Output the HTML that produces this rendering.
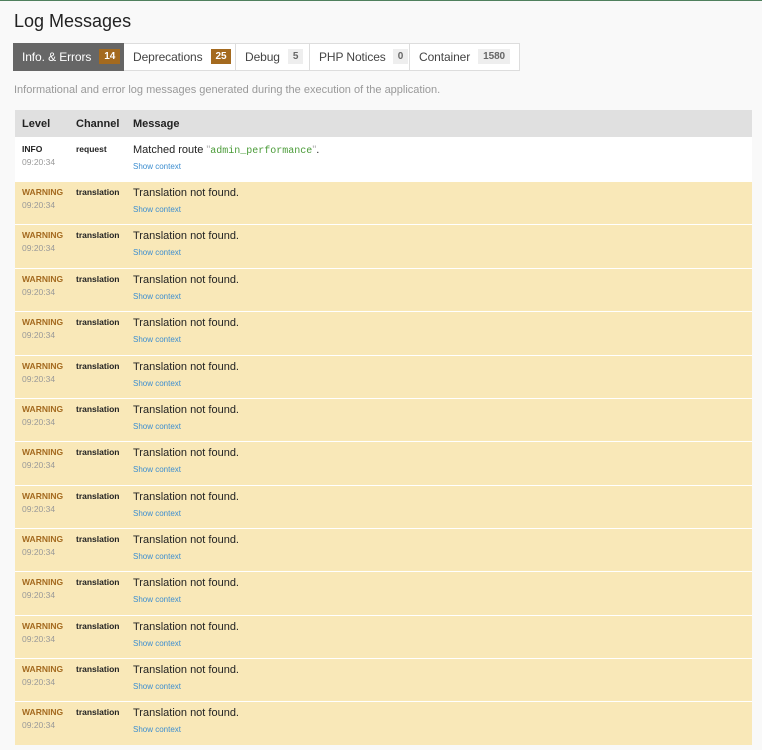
<!DOCTYPE html>
<html><head><style>
body{margin:0;width:762px;height:750px;background:#f9f9f9;font-family:"Liberation Sans",Arial,sans-serif;position:relative;overflow:hidden;border-top:1px solid #4f805d;box-sizing:border-box}
.a{position:absolute}
h1{position:absolute;left:14px;top:10px;margin:0;font-size:18px;font-weight:normal;color:#222}
.tabs{position:absolute;left:13px;top:42px;height:28px;display:flex}
.tab{height:28px;border:1px solid #ddd;border-left:none;background:#fff;font-size:12px;color:#444;display:flex;align-items:center;padding:0 9px;box-sizing:border-box;white-space:nowrap;letter-spacing:-0.1px}
.tab.on{background:#666;color:#fff;border-color:#666}
.b{margin-left:8px;font-size:10px;font-weight:bold;line-height:15px;padding:0 5px;background:#eee;color:#666;display:inline-block;position:relative;top:-1px}
.b.o{background:#a46a1f;color:#fff}
.desc{left:14px;top:83px;font-size:11px;color:#999}
.hdr{left:15px;top:109px;width:737px;height:27px;background:#e0e0e0;font-size:11px;font-weight:bold;color:#222}
.row{left:15px;width:737px;height:43px;border-top:1px solid #fff;background:#f9e8b8}
.lv{position:absolute;left:7px;top:5px;font-size:8.5px;font-weight:bold;color:#a46a1f}
.tm{position:absolute;left:7px;top:18px;font-size:8.5px;color:#999}
.ch{position:absolute;left:61px;top:5px;font-size:8.5px;font-weight:bold;color:#222}
.ms{position:absolute;left:118px;top:5px;font-size:11px;color:#222}
.sc{position:absolute;left:118px;top:23px;font-size:8px;color:#3d8ed0}
</style></head><body>
<h1>Log Messages</h1>
<div class="tabs">
<div class="tab on" style="width:111px">Info. &amp; Errors<span class="b o">14</span></div>
<div class="tab" style="width:112px">Deprecations<span class="b o">25</span></div>
<div class="tab" style="width:74px">Debug<span class="b">5</span></div>
<div class="tab" style="width:100px">PHP Notices<span class="b" style="margin-left:7px">0</span></div>
<div class="tab" style="width:110px">Container<span class="b">1580</span></div>
</div>
<div class="a desc">Informational and error log messages generated during the execution of the application.</div>
<div class="a hdr"><span class="a" style="left:7px;top:8px">Level</span><span class="a" style="left:61px;top:8px">Channel</span><span class="a" style="left:118px;top:8px">Message</span></div>
<div class="a row" style="top:136px;height:44px;border:none;background:#fff"><span class="lv" style="color:#222;top:7px">INFO</span><span class="tm" style="top:20px">09:20:34</span><span class="ch" style="top:7px">request</span><span class="ms" style="top:7px">Matched route <span style="color:#aaa">"</span><span style="font-family:'Liberation Mono',monospace;font-size:10px;color:#4a9b38">admin_performance</span><span style="color:#aaa">"</span>.</span><span class="sc" style="top:25px">Show context</span></div>
<div class="a row" style="top:180px"><span class="lv">WARNING</span><span class="tm">09:20:34</span><span class="ch">translation</span><span class="ms">Translation not found.</span><span class="sc">Show context</span></div>
<div class="a row" style="top:223px"><span class="lv">WARNING</span><span class="tm">09:20:34</span><span class="ch">translation</span><span class="ms">Translation not found.</span><span class="sc">Show context</span></div>
<div class="a row" style="top:267px"><span class="lv">WARNING</span><span class="tm">09:20:34</span><span class="ch">translation</span><span class="ms">Translation not found.</span><span class="sc">Show context</span></div>
<div class="a row" style="top:310px"><span class="lv">WARNING</span><span class="tm">09:20:34</span><span class="ch">translation</span><span class="ms">Translation not found.</span><span class="sc">Show context</span></div>
<div class="a row" style="top:354px"><span class="lv">WARNING</span><span class="tm">09:20:34</span><span class="ch">translation</span><span class="ms">Translation not found.</span><span class="sc">Show context</span></div>
<div class="a row" style="top:397px"><span class="lv">WARNING</span><span class="tm">09:20:34</span><span class="ch">translation</span><span class="ms">Translation not found.</span><span class="sc">Show context</span></div>
<div class="a row" style="top:440px"><span class="lv">WARNING</span><span class="tm">09:20:34</span><span class="ch">translation</span><span class="ms">Translation not found.</span><span class="sc">Show context</span></div>
<div class="a row" style="top:484px"><span class="lv">WARNING</span><span class="tm">09:20:34</span><span class="ch">translation</span><span class="ms">Translation not found.</span><span class="sc">Show context</span></div>
<div class="a row" style="top:527px"><span class="lv">WARNING</span><span class="tm">09:20:34</span><span class="ch">translation</span><span class="ms">Translation not found.</span><span class="sc">Show context</span></div>
<div class="a row" style="top:570px"><span class="lv">WARNING</span><span class="tm">09:20:34</span><span class="ch">translation</span><span class="ms">Translation not found.</span><span class="sc">Show context</span></div>
<div class="a row" style="top:614px"><span class="lv">WARNING</span><span class="tm">09:20:34</span><span class="ch">translation</span><span class="ms">Translation not found.</span><span class="sc">Show context</span></div>
<div class="a row" style="top:657px"><span class="lv">WARNING</span><span class="tm">09:20:34</span><span class="ch">translation</span><span class="ms">Translation not found.</span><span class="sc">Show context</span></div>
<div class="a row" style="top:700px"><span class="lv">WARNING</span><span class="tm">09:20:34</span><span class="ch">translation</span><span class="ms">Translation not found.</span><span class="sc">Show context</span></div>
</body></html>
